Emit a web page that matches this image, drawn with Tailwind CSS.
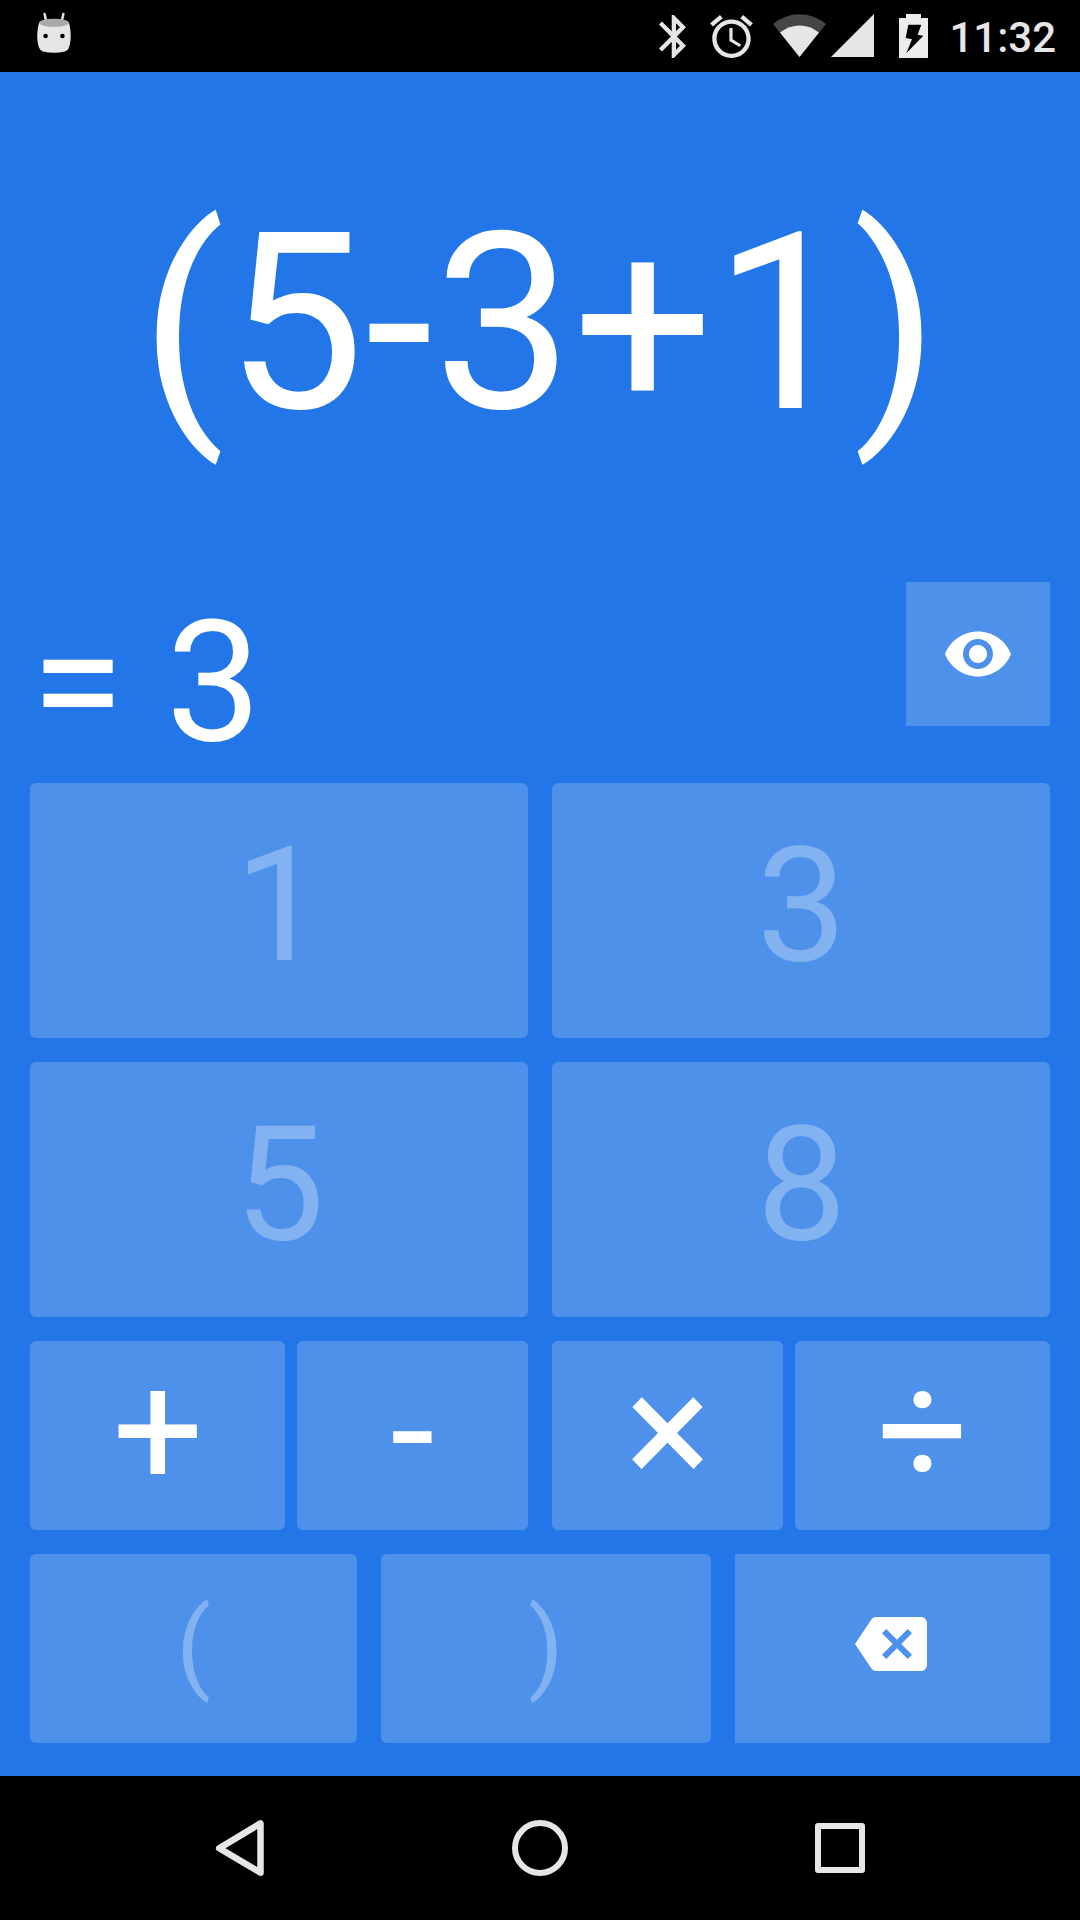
<!DOCTYPE html>
<html lang="en">
<head>
<meta charset="utf-8">
<title>Calculator puzzle</title>
<script src="https://cdn.jsdelivr.net/npm/@tailwindcss/browser@4"></script>
</head>
<body class="flex h-[1920px] w-[1080px] flex-col overflow-hidden bg-[#2276e7] font-[Roboto,sans-serif] text-white">
  <!-- Status bar -->
  <header class="flex h-[72px] items-center bg-black pr-6 pl-9 text-[#e6e6e6]">
    <svg class="h-[72px] w-9" viewBox="36 0 36 72" fill="none">
      <path d="M44.600 14l1.800 8M63.400 14l-1.800 8" stroke="#e6e6e6" stroke-width="2.500" stroke-linecap="round"/>
      <path d="M39 23C36.700 31 36.700 41 39 47.500Q40 50.800 43 51.500Q54 54 65 51.500Q68 50.800 69 47.500C71.300 41 71.300 31 69 23Z" fill="#e6e6e6"/>
      <ellipse cx="54" cy="22.800" rx="15" ry="4" fill="#aaa"/>
      <circle cx="45.600" cy="36" r="2.300" fill="#000"/><circle cx="62.400" cy="36" r="2.300" fill="#000"/>
    </svg>
    <div class="ml-auto flex items-center">
      <svg class="mt-px mr-6 h-[43px] w-[27px]" viewBox="5 2 12.710 20" preserveAspectRatio="none" fill="currentColor"><path d="M17.710 7.710L12 2h-1v7.590L6.410 5 5 6.410 10.590 12 5 17.590 6.410 19 11 14.410V22h1l5.710-5.710-4.300-4.290 4.300-4.290zM13 5.830l1.880 1.880L13 9.590V5.830zm1.880 10.460L13 18.170v-3.760l1.880 1.880z"/></svg>
      <svg class="mt-px mr-5 h-[43px] w-[43px]" viewBox="2 1.860 20 20.140" fill="currentColor"><path d="M22 5.720l-4.600-3.860-1.290 1.530 4.600 3.860L22 5.720zM7.880 3.390L6.600 1.860 2 5.710l1.290 1.530 4.590-3.850zM12.500 8H11v6l4.750 2.850.75-1.230-4-2.370V8zM12 4c-4.970 0-9 4.030-9 9s4.020 9 9 9c4.970 0 9-4.030 9-9s-4.030-9-9-9zm0 16c-3.870 0-7-3.130-7-7s3.130-7 7-7 7 3.130 7 7-3.130 7-7 7z"/></svg>
      <svg class="mr-[5px] h-[72px] w-[53px]" viewBox="773 0 53 72"><path d="M799.500 57L773 24Q785 14.300 799.500 14.300T826 24Z" fill="#464646"/><path d="M799.500 57L780 32.500Q789 25.500 799.500 25.500T819 32.500Z" fill="#e6e6e6"/></svg>
      <svg class="mr-[25px] h-[72px] w-[43px]" viewBox="831 0 43 72" fill="currentColor"><path d="M831 57L874 14V57Z"/></svg>
      <svg class="mr-[21px] h-[72px] w-[29px]" viewBox="899 0 29 72"><path d="M899 18h7v-4h15v4h7v40h-29z" fill="#ededed"/><path d="M908.300 24.700h13l-3.700 10 5.700 1-17 17.600 5.700-14-6.300-1.300z" fill="#000"/></svg>
      <span class="pt-1 text-[42px] leading-[68px] font-medium">11:32</span>
    </div>
  </header>

  <!-- Expression -->
  <section class="flex h-[503px] items-start justify-center">
    <div class="pt-px text-[247px] leading-[502px] tracking-[0.500px] whitespace-nowrap">(5-3+1)</div>
  </section>

  <!-- Result -->
  <section class="flex h-[208px] items-start justify-between pt-[7px] pr-[30px] pl-[31px]">
    <div class="mt-px text-[169.500px] leading-[199px] whitespace-nowrap">= 3</div>
    <button class="flex h-36 w-36 items-center justify-center bg-white/20" aria-label="Reveal">
      <svg class="h-[72px] w-[72px]" viewBox="0 0 24 24" fill="currentColor"><path d="M12 4.500C7 4.500 2.730 7.610 1 12c1.730 4.390 6 7.500 11 7.500s9.270-3.110 11-7.500c-1.730-4.390-6-7.500-11-7.500zM12 17c-2.760 0-5-2.240-5-5s2.240-5 5-5 5 2.240 5 5-2.240 5-5 5zm0-8c-1.660 0-3 1.340-3 3s1.340 3 3 3 3-1.340 3-3-1.340-3-3-3z"/></svg>
    </button>
  </section>

  <!-- Keypad -->
  <main class="flex flex-1 flex-col gap-6 px-[30px]">
    <div class="grid grid-cols-2 gap-6 text-[160.500px] leading-none text-white/30">
      <button class="flex h-[255px] items-center justify-center rounded-[6px] bg-white/20 pb-[11px] pl-px">1</button>
      <button class="flex h-[255px] items-center justify-center rounded-[6px] bg-white/20 pb-[11px] pl-px">3</button>
      <button class="flex h-[255px] items-center justify-center rounded-[6px] bg-white/20 pb-[11px] pl-px">5</button>
      <button class="flex h-[255px] items-center justify-center rounded-[6px] bg-white/20 pb-[11px] pl-px">8</button>
    </div>
    <div class="grid grid-cols-2 gap-6 text-[160.500px] leading-none">
      <div class="flex gap-3">
        <button class="flex h-[189px] w-[255px] items-center justify-center rounded-[6px] bg-white/20 pb-[11px] pl-px">+</button>
        <button class="flex h-[189px] w-[231px] items-center justify-center rounded-[6px] bg-white/20 pb-[11px]">-</button>
      </div>
      <div class="flex gap-3">
        <button class="flex h-[189px] w-[231px] items-center justify-center rounded-[6px] bg-white/20 pb-[11px] pl-px">×</button>
        <button class="flex h-[189px] w-[255px] items-center justify-center rounded-[6px] bg-white/20 pb-[11px] pl-px">÷</button>
      </div>
    </div>
    <div class="flex gap-6 text-[101px] leading-none">
      <button class="flex h-[189px] w-[327px] items-center justify-center rounded-[6px] bg-white/20 pb-[7px] text-white/30">(</button>
      <button class="flex h-[189px] w-[330px] items-center justify-center rounded-[6px] bg-white/20 pb-[7px] text-white/30">)</button>
      <button class="flex h-[189px] w-[315px] items-center justify-center bg-white/20 pr-[3px] pb-[9px]" aria-label="Backspace">
        <svg class="h-[72px] w-[72px]" viewBox="0 0 24 24" fill="currentColor"><path d="M22 3H7c-.69 0-1.230.35-1.590.88L0 12l5.410 8.110c.36.53.9.89 1.590.89h15c1.100 0 2-.9 2-2V5c0-1.100-.9-2-2-2zm-3 12.590L17.590 17 14 13.410 10.410 17 9 15.590 12.590 12 9 8.410 10.410 7 14 10.590 17.590 7 19 8.410 15.410 12 19 15.590z"/></svg>
      </button>
    </div>
  </main>

  <!-- Navigation bar -->
  <nav class="flex h-36 items-center justify-center gap-[240px] bg-black">
    <svg class="h-[60px] w-[60px]" viewBox="210 1818 60 60" fill="none" stroke="#e6e6e6" stroke-width="6.500" stroke-linejoin="round"><path d="M219.200 1848.200L260.500 1823.400V1872.700Z"/></svg>
    <svg class="h-[60px] w-[60px]" viewBox="0 0 60 60" fill="none" stroke="#e6e6e6" stroke-width="6"><circle cx="30" cy="30" r="25"/></svg>
    <svg class="h-[60px] w-[60px]" viewBox="810 1818 60 60" fill="none" stroke="#e6e6e6" stroke-width="6" stroke-linejoin="round"><rect x="818" y="1826" width="44" height="44"/></svg>
  </nav>
</body>
</html>
